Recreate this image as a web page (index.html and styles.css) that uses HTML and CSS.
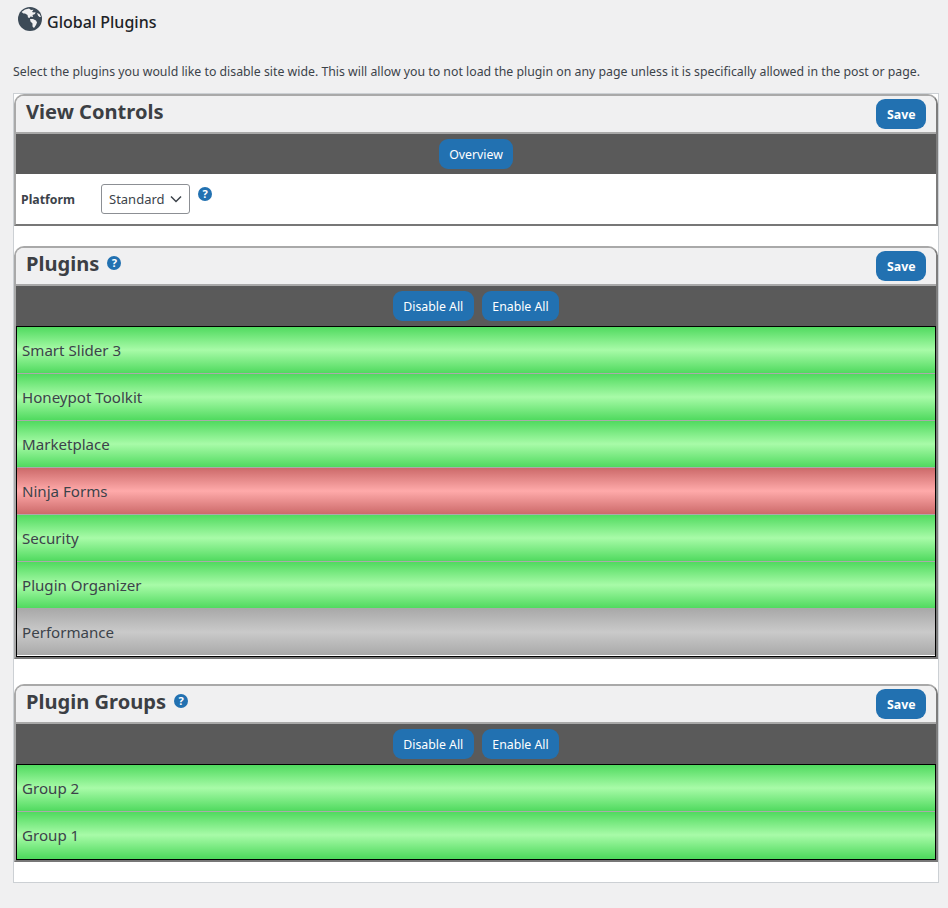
FILE: index.html
```
<!DOCTYPE html>
<html lang="en">
<head>
<meta charset="utf-8">
<title>Global Plugins</title>
<link rel="stylesheet" href="styles.css">
</head>
<body>
<div class="page-title">
  <svg class="globe" viewBox="0 0 24 24" aria-hidden="true"><circle cx="12" cy="12" r="12" fill="#3c4a57"/><path fill="#f0f0f1" d="M3.5 5 7 2.6 11 1.6 13 3 15.5 2.8 14 5 16 5.5 17.5 5 17 7 14.5 8 15 10 12.5 9.5 11.5 11 10 10.5 9.5 8 7 6.5 5.5 6.5Z"/><path fill="#f0f0f1" d="M12 12 15 12 18 13.5 19 15.5 18 18 16 21 14.5 19.5 14.5 16.5 12.5 14.5Z"/><path fill="#f0f0f1" d="M19 6 21.5 7 23 10 21.5 10 20 8.5Z"/></svg>
  <h1 class="title-text">Global Plugins</h1>
</div>
<p class="intro">Select the plugins you would like to disable site wide. This will allow you to not load the plugin on any page unless it is specifically allowed in the post or page.</p>
<main class="wrap">
  <section class="panel panel-view">
    <header class="panel-head">
      <h2 class="panel-title">View Controls</h2>
      <button class="btn btn-save">Save</button>
    </header>
    <div class="toolbar"><button class="btn">Overview</button></div>
    <div class="controls">
      <label class="control-label">Platform</label>
      <div class="select">Standard<svg class="chev" viewBox="0 0 12 8"><path d="M1 1.5 6 6.5 11 1.5" fill="none" stroke="#3c434a" stroke-width="1.5"/></svg></div>
      <span class="help help-control">?</span>
    </div>
  </section>
  <section class="panel panel-plugins">
    <header class="panel-head">
      <h2 class="panel-title">Plugins</h2><span class="help">?</span>
      <button class="btn btn-save">Save</button>
    </header>
    <div class="toolbar"><button class="btn">Disable All</button><button class="btn">Enable All</button></div>
    <ul class="list">
      <li class="row on">Smart Slider 3</li>
      <li class="row on">Honeypot Toolkit</li>
      <li class="row on">Marketplace</li>
      <li class="row off">Ninja Forms</li>
      <li class="row on">Security</li>
      <li class="row on">Plugin Organizer</li>
      <li class="row na">Performance</li>
    </ul>
  </section>
  <section class="panel">
    <header class="panel-head">
      <h2 class="panel-title">Plugin Groups</h2><span class="help">?</span>
      <button class="btn btn-save">Save</button>
    </header>
    <div class="toolbar"><button class="btn">Disable All</button><button class="btn">Enable All</button></div>
    <ul class="list">
      <li class="row on">Group 2</li>
      <li class="row on">Group 1</li>
    </ul>
  </section>
</main>
</body>
</html>
```
FILE: styles.css
```
* { box-sizing: border-box; }
html, body { margin: 0; padding: 0; }
body {
  width: 948px;
  height: 908px;
  overflow: hidden;
  background: #f0f0f1;
  color: #3c434a;
  font-family: "Noto Sans", sans-serif;
  font-size: 13px;
  padding: 6px 9px 0 13px;
}
.page-title { display: flex; align-items: flex-start; height: 56px; padding-left: 5px; }
.globe { width: 24px; height: 24px; margin-top: 1px; }
.title-text { margin: 6px 0 0 5px; font-size: 16px; line-height: 20px; font-weight: 500; color: #1d2327; }
.intro { margin: 0 0 11px; font-size: 12.3px; line-height: 20px; white-space: nowrap; }
.wrap { background: #fff; border: 1px solid #ccd0d4; height: 790px; width: 926px; }
.panel { border: solid #a9a9a9; border-width: 2px; border-radius: 10px 10px 0 0; border-right-color: #7d7d7d; border-bottom-color: #777; }
.panel-view { height: 132px; margin-bottom: 20px; }
.panel-plugins { margin-bottom: 25px; }
.panel-head { display: flex; align-items: center; height: 38px; background: #f0f0f1; border-radius: 8px 8px 0 0; padding: 0 10px; border-bottom: 2px solid #a9a9a9; }
.panel-title { margin: 0 0 4px; font-size: 20.1px; line-height: 28px; font-weight: 700; color: #3c3f44; }
.btn { font-family: inherit; font-size: 12.3px; line-height: 18px; height: 30px; padding: 1px 10.5px 0; color: #fff; background: #2271b1; border: 0; border-radius: 9px; }
.btn-save { margin: 3px 0 0 auto; align-self: flex-start; font-weight: 700; }
.toolbar { display: flex; justify-content: center; align-items: center; gap: 8px; height: 40px; background: #5a5a5a; }
.controls { display: flex; align-items: flex-start; background: #fff; height: 50px; padding: 10px 0 0 5px; }
.control-label { font-size: 12.3px; font-weight: 700; width: 80px; line-height: 30px; padding-top: 1px; }
.select { display: flex; align-items: center; justify-content: space-between; width: 89px; height: 30px; padding: 0 7px 0 7px; border: 1px solid #8c8f94; border-radius: 3px; }
.chev { width: 12px; height: 8px; }
.help { display: inline-block; width: 14px; height: 14px; margin: -6px 0 0 8px; border-radius: 50%; background: #2271b1; color: #fff; font-size: 11px; font-weight: 700; line-height: 14px; text-align: center; }
.help-control { margin: 3px 0 0 8px; }
.list { list-style: none; margin: 0; padding: 0; border: 1px solid #000; }
.row { height: 47px; padding-left: 5px; font-size: 15.1px; line-height: 46px; color: #3c434a; border-bottom: 1px solid #aaa; }
.row:last-child { border-bottom-color: transparent; }
.on { background: linear-gradient(#50da5f, #a8fba8 50%, #50da5f); }
.off { background: linear-gradient(#cc6a6a, #ffaaaa 50%, #cc6a6a); }
.na { background: linear-gradient(#a9a9a9, #cacaca 50%, #a9a9a9); }
.na.row:last-child { border-bottom-color: #fff; }
```
